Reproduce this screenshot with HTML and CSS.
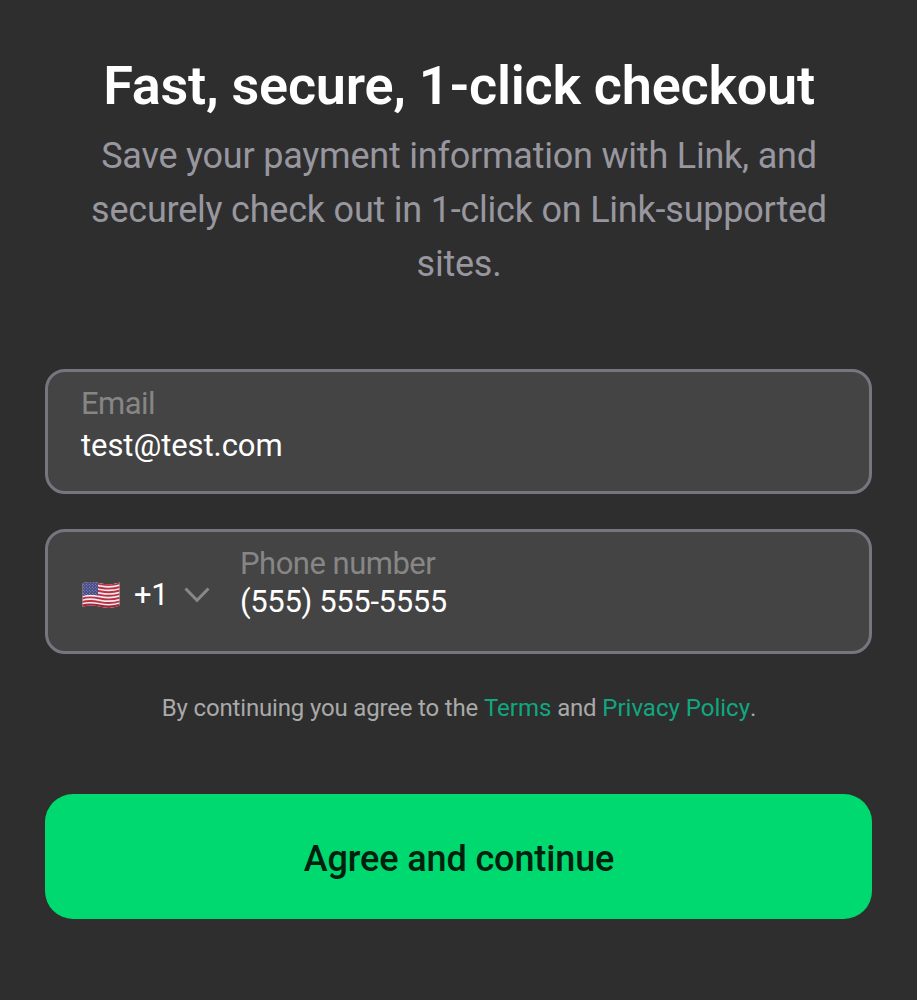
FILE: index.html
```html
<!DOCTYPE html>
<html lang="en">
<head>
<meta charset="utf-8">
<title>Checkout</title>
<link rel="stylesheet" href="styles.css">
</head>
<body>
<main class="sheet">
  <h1 class="title">Fast, secure, 1-click checkout</h1>
  <p class="subtitle">Save your payment information with Link, and securely check out in 1-click on Link-supported sites.</p>
  <div class="field">
    <div class="entry">
      <span class="label">Email</span>
      <span class="value">test@test.com</span>
    </div>
  </div>
  <div class="field field-phone">
    <div class="country">
      <svg class="flag" width="40" height="32" viewBox="0 0 40 32">
        <defs>
          <clipPath id="wave"><path d="M1.5 4.2C7 2.4 13 3 19 4.2C26 5.6 32 5.6 38.5 3.4V26.6C32 29.4 26 29.4 19 27.8C13 26.2 7 26.2 1.5 27.8Z"/></clipPath>
          <pattern id="stars" width="3" height="3" patternUnits="userSpaceOnUse">
            <rect width="3" height="3" fill="#474b88"/>
            <circle cx="0.8" cy="0.8" r="0.5" fill="#a5a7c8"/>
            <circle cx="2.3" cy="2.3" r="0.5" fill="#a5a7c8"/>
          </pattern>
        </defs>
        <g clip-path="url(#wave)">
          <rect width="40" height="32" fill="#f0edef"/>
          <g fill="none" stroke="#bd2f45" stroke-width="1.9">
            <path d="M1 5.1C7 3.3 13 3.9 19 5.1C26 6.5 32 6.5 39 4.3"/>
            <path d="M1 8.7C7 6.9 13 7.5 19 8.7C26 10.1 32 10.1 39 7.9"/>
            <path d="M1 12.3C7 10.5 13 11.1 19 12.3C26 13.7 32 13.7 39 11.5"/>
            <path d="M1 15.9C7 14.1 13 14.7 19 15.9C26 17.3 32 17.3 39 15.1"/>
            <path d="M1 19.5C7 17.7 13 18.3 19 19.5C26 20.9 32 20.9 39 18.7"/>
            <path d="M1 23.1C7 21.3 13 21.9 19 23.1C26 24.5 32 24.5 39 22.3"/>
            <path d="M1 26.8C7 25 13 25.6 19 26.8C26 28.2 32 28.2 39 26" stroke="#a32438" stroke-width="2.4"/>
          </g>
          <path d="M1 3H17V16.4C12 15.4 7 15.5 1 17.2Z" fill="url(#stars)"/>
        </g>
      </svg>
      <span class="code">+1</span>
      <svg class="chevron" width="26" height="16" viewBox="0 0 26 16"><path d="M1.5 1.5L13 13.3L24.5 1.5" fill="none" stroke="#88888a" stroke-width="3"/></svg>
    </div>
    <div class="entry">
      <span class="label">Phone number</span>
      <span class="value">(555) 555-5555</span>
    </div>
  </div>
  <p class="legal">By continuing you agree to the <a class="link">Terms</a> and <a class="link">Privacy Policy</a>.</p>
  <button class="submit">Agree and continue</button>
</main>
</body>
</html>
```
FILE: styles.css
```css
* { box-sizing: border-box; }
body { margin: 0; background: #2e2e2e; font-family: Roboto, sans-serif; }
.sheet { height: 1000px; padding: 54px 45px 0; display: flex; flex-direction: column; text-align: center; }
.title { margin: 0; padding-left: 1px; color: #fff; font-size: 54px; line-height: 64px; font-weight: 600; letter-spacing: -0.24px; white-space: nowrap; }
.subtitle { margin: 11px 26px 0 27px; color: #98979f; font-size: 36px; line-height: 54px; letter-spacing: -0.22px; }
.field { height: 125px; flex: none; border: 3px solid #777680; border-radius: 20px; background: #444; text-align: left; display: flex; padding: 12px 33px; margin-top: 78px; }
.field-phone { margin-top: 35px; }
.entry { display: flex; flex-direction: column; }
.label { color: #868686; font-size: 31px; line-height: 40px; letter-spacing: -0.55px; }
.field-phone .label { letter-spacing: -0.5px; }
.value { color: #fff; font-size: 31px; line-height: 44px; letter-spacing: -0.08px; }
.field-phone .value { line-height: 36px; letter-spacing: -0.36px; }
.country { display: flex; align-items: center; width: 159px; height: 101px; }
.flag { margin-left: -0.5px; }
.code { color: #fff; font-size: 31px; margin-left: 13.5px; letter-spacing: -0.3px; }
.chevron { margin-left: 16px; }
.legal { margin: 38px 0 0; padding-left: 1px; color: #a9a9a9; font-size: 24px; line-height: 32px; letter-spacing: -0.17px; }
.link { color: #10a780; letter-spacing: 0; }
.submit { margin-top: 70px; height: 125px; flex: none; padding: 4px 0 0 1px; border: 0; border-radius: 28px; background: #00d870; color: #00200f; font: 500 36px Roboto, sans-serif; letter-spacing: -0.12px; }
```
